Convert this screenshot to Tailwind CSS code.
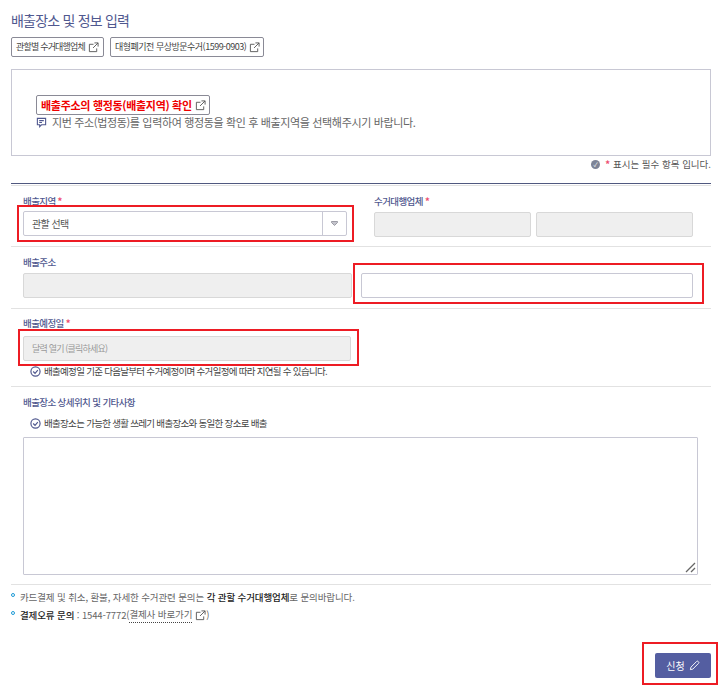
<!DOCTYPE html>
<html lang="ko">
<head>
  <meta charset="UTF-8">
  <title>배출장소 및 정보 입력</title>
  <script src="https://cdn.jsdelivr.net/npm/@tailwindcss/browser@4"></script>
</head>
<body class="bg-white font-['Noto_Sans_CJK_KR','Noto_Sans',sans-serif] text-[#555]">
  <div class="w-[726px] h-[690px] overflow-hidden pl-[11px] pr-[15px]">
    <h2 class="pt-[11px] h-[37px] text-[14px] leading-[18px] tracking-[-0.8px] text-[#50588f]">배출장소 및 정보 입력</h2>

    <div class="flex gap-[6px] h-[20px]">
      <a class="flex items-center gap-[3px] h-[20px] w-[93px] pl-[4px] border border-[#8a8a96] rounded-[2px] text-[9px] tracking-[-0.8px] text-[#444] whitespace-nowrap">
        관할별 수거대행업체
        <svg class="w-[11px] h-[11px] text-[#555] shrink-0" viewBox="0 0 12 12" fill="none" stroke="currentColor"><path d="M9.5 7v3.500h-8v-8H6M7 1h4v4M11 1L5.500 6.500"/></svg>
      </a>
      <a class="flex items-center gap-[3px] h-[20px] w-[154px] pl-[4px] border border-[#8a8a96] rounded-[2px] text-[9px] tracking-[-0.5px] text-[#444] whitespace-nowrap">
        대형폐기전 무상방문수거(1599-0903)
        <svg class="w-[11px] h-[11px] text-[#555] shrink-0" viewBox="0 0 12 12" fill="none" stroke="currentColor"><path d="M9.5 7v3.500h-8v-8H6M7 1h4v4M11 1L5.500 6.500"/></svg>
      </a>
    </div>

    <div class="mt-[12px] h-[87px] border border-[#c8c8d4] pl-[24px] pt-[25px]">
      <a class="flex items-center gap-[3px] w-[174px] h-[20px] pl-[4px] border border-[#8a8a96] rounded-[2px] text-[11px] font-bold tracking-[-0.3px] text-[#f00000] whitespace-nowrap">
        배출주소의 행정동(배출지역) 확인
        <svg class="w-[11px] h-[11px] text-[#555] shrink-0" viewBox="0 0 12 12" fill="none" stroke="currentColor"><path d="M9.5 7v3.500h-8v-8H6M7 1h4v4M11 1L5.500 6.500"/></svg>
      </a>
      <p class="flex items-center gap-[5px] h-[17px] mt-[-1px] text-[11px] tracking-[-0.35px] text-[#666] whitespace-nowrap">
        <svg class="w-[11px] h-[11px] text-[#50588f] shrink-0" viewBox="0 0 12 12" fill="none" stroke="currentColor" stroke-width="1.200"><path d="M1.500 1.500h9v7H6l-2 2v-2H1.500zM3.500 4h5M3.500 6h3"/></svg>
        지번 주소(법정동)를 입력하여 행정동을 확인 후 배출지역을 선택해주시기 바랍니다.
      </p>
    </div>

    <p class="flex items-center justify-end gap-[3px] h-[15px] mt-[1px] text-[9.5px] text-[#555]">
      <span class="flex items-center justify-center w-[9px] h-[9px] rounded-full bg-[#7d8497] text-white text-[6px] leading-none">✓</span>
      <span class="text-[#ee4d6f] font-bold ml-[2px]">*</span> 표시는 필수 항목 입니다.
    </p>

    <div class="mt-[11px] h-[1px] bg-[#50587f]"></div>
    <div class="mt-[1px] h-[1px] bg-[#e2e2e2]"></div>

    <!-- 배출지역 / 수거대행업체 -->
    <div class="flex h-[61px] border-b border-[#e2e2e2] pl-[12px] pt-[8px]">
      <div class="w-[351px]">
        <label class="block h-[17px] text-[9.5px] leading-[14px] tracking-[-0.6px] font-medium text-[#50588f]">배출지역<span class="text-[#ee4d6f] font-bold"> *</span></label>
        <div class="relative flex items-center w-[324px] h-[25px] border border-[#c8c8d4] rounded-[2px] text-[10px] tracking-[-0.6px] text-[#555]">
          <span class="flex-1 pl-[8px]">관할 선택</span>
          <span class="flex items-center justify-center w-[24px] h-full border-l border-[#c8c8d4]">
            <svg class="w-[7px] h-[5px]" viewBox="0 0 7 5"><path d="M0.500 0.500h6v1L3.500 4.500l-3-3z" fill="#c4c4cc" stroke="#8a8a96" stroke-width="0.800"/></svg>
          </span>
          <div class="absolute left-[-7px] right-[-8px] top-[-7px] bottom-[-7px] border-2 border-[#ed1c24]"></div>
        </div>
      </div>
      <div>
        <label class="block h-[18px] text-[9.5px] leading-[14px] tracking-[-0.6px] font-medium text-[#50588f]">수거대행업체<span class="text-[#ee4d6f] font-bold"> *</span></label>
        <div class="flex gap-[5px]">
          <div class="w-[157px] h-[25px] border border-[#d8d8d8] rounded-[2px] bg-[#efefef]"></div>
          <div class="w-[157px] h-[25px] border border-[#d8d8d8] rounded-[2px] bg-[#efefef]"></div>
        </div>
      </div>
    </div>

    <!-- 배출주소 -->
    <div class="h-[62px] border-b border-[#e2e2e2] pl-[12px] pt-[8px]">
      <label class="block h-[18px] text-[9.5px] leading-[14px] tracking-[-0.6px] font-medium text-[#50588f]">배출주소</label>
      <div class="flex gap-[9px]">
        <div class="w-[329px] h-[25px] border border-[#d8d8d8] rounded-[2px] bg-[#efefef]"></div>
        <div class="relative w-[332px] h-[25px] border border-[#c8c8d4] rounded-[2px]">
          <div class="absolute left-[-9px] right-[-12px] top-[-11px] bottom-[-7px] border-2 border-[#ed1c24]"></div>
        </div>
      </div>
    </div>

    <!-- 배출예정일 -->
    <div class="h-[78px] border-b border-[#e2e2e2] pl-[12px] pt-[7px]">
      <label class="block h-[20px] text-[9.5px] leading-[14px] tracking-[-0.6px] font-medium text-[#50588f]">배출예정일<span class="text-[#ee4d6f] font-bold"> *</span></label>
      <div class="relative flex items-center w-[328px] h-[25px] pl-[8px] border border-[#d8d8d8] rounded-[2px] bg-[#efefef] text-[9px] tracking-[-0.8px] text-[#999]">
        달력 열기 (클릭하세요)
        <div class="absolute left-[-6px] right-[-9px] top-[-8px] bottom-[-6px] border-2 border-[#ed1c24]"></div>
      </div>
      <p class="flex items-center gap-[3px] h-[20px] ml-[7px] text-[9.5px] tracking-[-0.7px] text-[#444] whitespace-nowrap">
        <svg class="w-[11px] h-[11px] shrink-0" viewBox="0 0 12 12" fill="none" stroke="#50588f" stroke-width="1.300"><circle cx="6" cy="6" r="5"/><path d="M3.500 6l2 2 3-3.500"/></svg>
        배출예정일 기준 다음날부터 수거예정이며 수거일정에 따라 지연될 수 있습니다.
      </p>
    </div>

    <!-- 상세위치 -->
    <div class="h-[198px] border-b border-[#e2e2e2] pl-[12px] pt-[8px]">
      <label class="block h-[17px] text-[9.5px] leading-[14px] tracking-[-0.6px] font-medium text-[#50588f]">배출장소 상세위치 및 기타사항</label>
      <p class="flex items-center gap-[3px] h-[22px] ml-[7px] text-[9.5px] tracking-[-0.7px] text-[#444] whitespace-nowrap">
        <svg class="w-[11px] h-[11px] shrink-0" viewBox="0 0 12 12" fill="none" stroke="#50588f" stroke-width="1.300"><circle cx="6" cy="6" r="5"/><path d="M3.500 6l2 2 3-3.500"/></svg>
        배출장소는 가능한 생활 쓰레기 배출장소와 동일한 장소로 배출
      </p>
      <div class="relative w-[675px] mt-[3px]">
        <textarea class="block w-full h-[138px] border border-[#c8c8d4] rounded-[1px] outline-none resize-none"></textarea>
        <svg class="absolute right-[2px] bottom-[2px] w-[11px] h-[11px] pointer-events-none" viewBox="0 0 11 11" fill="none" stroke="#666" stroke-width="1.300"><path d="M1 10L10 1M6 10l4-4"/></svg>
      </div>
    </div>

    <ul class="pt-[3px] text-[9.5px] tracking-[-0.12px] text-[#666]">
      <li class="flex items-center h-[18px] whitespace-nowrap">
        <span class="w-[4px] h-[4px] mr-[5px] mt-[-5px] rounded-full border border-[#1e9ad6]"></span>
        카드결제 및 취소, 환불, 자세한 수거관련 문의는&nbsp;<b class="font-medium text-[#222]">각 관할 수거대행업체</b>로 문의바랍니다.
      </li>
      <li class="flex items-center h-[18px] whitespace-nowrap">
        <span class="w-[4px] h-[4px] mr-[5px] mt-[-5px] rounded-full border border-[#1e9ad6]"></span>
        <b class="font-medium text-[#222]">결제오류 문의</b>&nbsp;: 1544-7772(<span class="border-b border-dotted border-[#444]">결제사 바로가기</span>
        <svg class="w-[11px] h-[11px] ml-[3px] text-[#555]" viewBox="0 0 12 12" fill="none" stroke="currentColor"><path d="M9.500 7v3.500h-8v-8H6M7 1h4v4M11 1L5.500 6.500"/></svg>)
      </li>
    </ul>

    <div class="flex justify-end mt-[29px]">
      <div class="relative">
        <a class="flex items-center justify-center gap-[4px] w-[56px] h-[25px] rounded-[2px] bg-[#545ea1] text-[10px] text-white">
          신청
          <svg class="w-[11px] h-[11px]" viewBox="0 0 12 12" fill="none" stroke="currentColor"><path d="M1.500 10.500l.6-2.700L8.300 1.600a1.200 1.200 0 0 1 1.700 0l.4.4a1.200 1.200 0 0 1 0 1.700L4.200 9.900z"/></svg>
        </a>
        <div class="absolute left-[-13px] right-[-7px] top-[-11px] bottom-[-7px] border-2 border-[#ed1c24]"></div>
      </div>
    </div>
  </div>
</body>
</html>
